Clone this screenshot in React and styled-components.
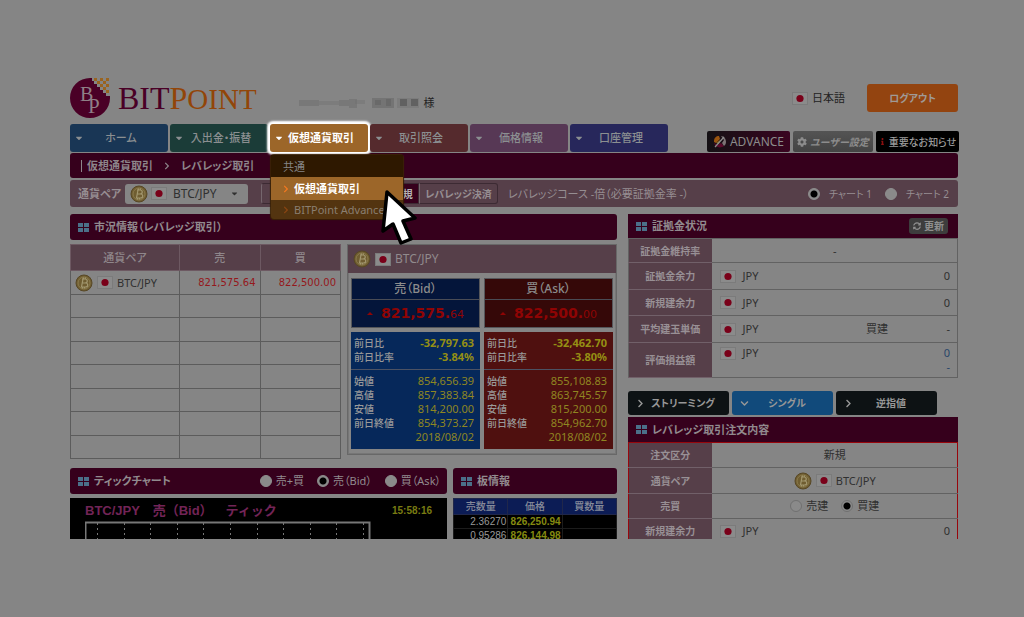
import React from 'react'
import styled, { createGlobalStyle, css } from 'styled-components'
import { FaCog, FaSyncAlt, FaInfo, FaChevronRight, FaChevronDown, FaCaretDown } from 'react-icons/fa'

const wine = '#36001c'
const mauve = '#563f49'
const paper = '#858585'
const line = '#626262'

const GlobalStyle = createGlobalStyle`
  * {
    box-sizing: border-box;
  }
  body {
    margin: 0;
    background: ${paper};
    color: #303030;
    font-family: 'Noto Sans', 'Noto Sans CJK JP', sans-serif;
    font-size: 11px;
    line-height: 14px;
    font-feature-settings: 'palt';
  }
  button, input, select {
    font: inherit;
    font-feature-settings: inherit;
    color: inherit;
    margin: 0;
  }
  button {
    border: 0;
    padding: 0;
    cursor: pointer;
  }
  a {
    color: inherit;
    text-decoration: none;
  }
  table {
    border-collapse: collapse;
    width: 100%;
  }
`

const Page = styled.div`
  height: 100vh;
  padding: 78px 66px 78px 70px;
  overflow: hidden;
`

const Screen = styled.div`
  height: 100%;
  overflow: hidden;
  margin: 0 -4px;
  padding: 0 4px;
`

const Header = styled.header`
  display: flex;
  align-items: center;
  height: 40px;
  margin-bottom: 6px;
`

const Brand = styled.a`
  display: flex;
  align-items: center;
  gap: 8px;
  font-family: 'Liberation Serif', serif;
  font-size: 32px;
  line-height: 38px;
  color: #4a0026;
  span {
    color: #924509;
  }
  small {
    font-size: 29px;
  }
`

const Customer = styled.div`
  display: flex;
  align-items: center;
  gap: 4px;
  flex: 1;
  padding: 10px 0 0 42px;
  color: #222;
`

const Language = styled.a`
  display: flex;
  align-items: center;
  gap: 4px;
  margin-right: 22px;
  color: #222;
`

const Logout = styled.button`
  width: 91px;
  height: 28px;
  border-radius: 3px;
  background: #934410;
  color: #a09a96;
  font-size: 10px;
  font-weight: 700;
`

const NavRow = styled.nav`
  display: flex;
  align-items: flex-end;
  justify-content: space-between;
  margin-bottom: 1px;
`

const Menu = styled.ul`
  display: flex;
  gap: 2px;
  margin: 0;
  padding: 0;
  list-style: none;
`

const MenuItem = styled.li`
  position: relative;
  width: 98px;
`

const MenuLink = styled.a`
  display: flex;
  align-items: center;
  height: 28px;
  padding: 0 10px 0 4px;
  border-radius: 3px;
  background: ${(p) => p.$color};
  color: #8b8f91;
  font-weight: 500;
  span {
    flex: 1;
    text-align: center;
  }
  ${(p) =>
    p.$open &&
    css`
      color: #fff;
      font-weight: 700;
      box-shadow: 0 0 2px 3px #fff;
    `}
`

const Dropdown = styled.ul`
  position: absolute;
  top: 31px;
  left: 1px;
  z-index: 2;
  width: 132px;
  margin: 0;
  padding: 0;
  list-style: none;
  border-radius: 3px;
  background: #533410;
  box-shadow: 0 0 1px 1px #3a2206;
`

const DropdownTitle = styled.li`
  padding: 5px 12px 3px;
  background: #2e1800;
  color: #858585;
`

const DropdownItem = styled.li`
  position: relative;
  background: ${(p) => (p.$active ? '#9c6629' : 'transparent')};
  color: ${(p) => (p.$active ? '#fff' : '#8a7f70')};
  font-weight: ${(p) => (p.$active ? 700 : 400)};
  a {
    display: flex;
    align-items: center;
    gap: 4px;
    height: ${(p) => (p.$active ? 23 : 19)}px;
    padding-left: 11px;
    white-space: nowrap;
  }
  a svg {
    color: ${(p) => (p.$active ? '#f47920' : '#8a4512')};
  }
`

const Pointer = styled.svg`
  position: absolute;
  left: 110px;
  top: 12px;
  z-index: 3;
`

const Tools = styled.div`
  display: flex;
  gap: 3px;
  margin-right: -1px;
`

const Tool = styled.button`
  display: flex;
  align-items: center;
  justify-content: center;
  gap: 3px;
  width: ${(p) => p.$width}px;
  height: 21px;
  border-radius: 2px;
  background: ${(p) => p.$bg};
  color: ${(p) => p.$color || '#8c8c8c'};
  font-size: ${(p) => p.$size || 10}px;
  font-weight: ${(p) => p.$weight || 400};
  font-style: ${(p) => (p.$italic ? 'italic' : 'normal')};
  white-space: nowrap;
`

const Crumbs = styled.div`
  display: flex;
  align-items: center;
  gap: 10px;
  height: 25px;
  padding-left: 11px;
  border-radius: 3px;
  background: ${wine};
  color: #8d858a;
  font-weight: 700;
  span {
    display: flex;
    gap: 5px;
  }
  span::before {
    content: '';
    width: 1px;
    height: 12px;
    background: #8d858a;
    align-self: center;
  }
`

const SubBar = styled.div`
  display: flex;
  align-items: center;
  height: 27px;
  margin: 2px 0 7px;
  padding: 0 9px 0 8px;
  border-radius: 3px;
  background: ${mauve};
  color: #968e92;
`

const PairLabel = styled.label`
  width: 47px;
  font-size: 11px;
  font-weight: 700;
`

const PairBox = styled.div`
  display: flex;
  align-items: center;
  gap: 3px;
  width: 123px;
  height: 20px;
  padding: 0 9px 0 5px;
  margin-right: 13px;
  border-radius: 3px;
  background: ${paper};
  color: #303030;
  select {
    flex: 1;
    min-width: 0;
    padding: 0 0 0 3px;
    border: 0;
    background: transparent;
    appearance: none;
    font-size: 12px;
  }
`

const CourseTabs = styled.div`
  display: flex;
`

const CourseTab = styled.button`
  width: 79px;
  height: 21px;
  border: 1px solid #3c2a33;
  border-left-color: #75666d;
  background: ${(p) => (p.$active ? wine : mauve)};
  color: ${(p) => (p.$active ? '#b5b5b5' : '#968e92')};
  font-size: 10px;
  font-weight: 700;
  &:first-child {
    border-radius: 3px 0 0 3px;
  }
  &:last-child {
    border-radius: 0 3px 3px 0;
  }
`

const Course = styled.p`
  flex: 1;
  margin: 0 0 0 10px;
`

const Radios = styled.div`
  display: flex;
  justify-content: ${(p) => (p.$center ? 'center' : 'flex-end')};
  gap: ${(p) => p.$gap}px;
  font-size: ${(p) => p.$size || 11}px;
  label {
    display: flex;
    align-items: center;
    gap: ${(p) => p.$inner || 4}px;
  }
`

const Radio = styled.input.attrs({ type: 'radio' })`
  appearance: none;
  width: 12px;
  height: 12px;
  border: ${(p) => (p.$thin ? '1px solid #707070' : '1px solid #8e8e8e')};
  border-radius: 50%;
  background: #8a8a8a;
  &:checked {
    background: radial-gradient(#000 0 3px, #8a8a8a 4px);
  }
`

const Columns = styled.main`
  display: grid;
  grid-template-columns: 547fr 330fr;
  gap: 11px;
  align-items: start;
`

const Split = styled.div`
  display: grid;
  grid-template-columns: ${(p) => p.$columns};
  gap: 6px;
  align-items: start;
`

const PanelHead = styled.div`
  display: flex;
  align-items: center;
  justify-content: space-between;
  height: ${(p) => p.$height || 26}px;
  margin-bottom: ${(p) => (p.$square ? 0 : 4)}px;
  padding: 0 ${(p) => (p.$square ? 10 : 6)}px 0 8px;
  border-radius: ${(p) => (p.$square ? 0 : 3)}px;
  background: ${wine};
  color: #918a8e;
  white-space: nowrap;
  h2 {
    display: flex;
    align-items: center;
    gap: 5px;
    margin: 0;
    font-size: 11px;
    font-weight: 700;
  }
`

const Refresh = styled.button`
  display: flex;
  align-items: center;
  gap: 3px;
  height: 16px;
  padding: 0 4px;
  border-radius: 3px;
  background: #3d3d3d;
  color: #8f8f8f;
  font-size: 10px;
  font-weight: 700;
`

const MarketTable = styled.table`
  table-layout: fixed;
  margin-bottom: 9px;
  th, td {
    border: 1px solid #5c5c5c;
    padding: 0 4px;
  }
  th {
    height: 26px;
    background: ${mauve};
    border-color: #6d5962;
    color: #8f878b;
    font-weight: 500;
  }
  th:first-child {
    width: 109px;
  }
  td {
    height: 24px;
    text-align: right;
    color: #95181c;
    font-family: 'DejaVu Sans', sans-serif;
    font-size: 10px;
  }
  tr:nth-child(even) td {
    height: 23px;
  }
`

const Pair = styled.span`
  display: flex;
  align-items: center;
  justify-content: ${(p) => (p.$center ? 'center' : 'flex-start')};
  gap: ${(p) => p.$gap || 4}px;
  color: ${(p) => p.$color || '#303030'};
  font-family: 'Noto Sans', sans-serif;
  font-size: ${(p) => p.$size || 11}px;
`

const Quote = styled.section`
  border: 1px solid #686868;
  box-shadow: inset 0 0 0 1px #767676;
`

const QuoteHead = styled.div`
  display: flex;
  align-items: center;
  height: 28px;
  padding-left: 5px;
  background: ${mauve};
`

const QuoteBody = styled.div`
  display: grid;
  grid-template-columns: 1fr 1fr;
  gap: 4px;
  padding: 5px 3px 5px;
`

const Price = styled.button`
  border: 1px solid #55565a;
  background: ${(p) => (p.$ask ? '#350808' : '#04153a')};
  color: #8c8c8c;
  text-align: center;
  font-weight: 500;
`

const PriceLabel = styled.span`
  display: block;
  height: 21px;
  font-size: 12px;
  line-height: 20px;
  border-bottom: 1px solid #4a4c55;
`

const PriceValue = styled.span`
  display: flex;
  align-items: baseline;
  justify-content: center;
  height: 27px;
  line-height: 27px;
  color: #8f0404;
  font-family: 'DejaVu Sans', sans-serif;
  font-size: 14px;
  font-weight: 700;
  i {
    width: 0;
    height: 0;
    margin-right: 8px;
    align-self: center;
    border: 3px solid transparent;
    border-top: 0;
    border-bottom-color: #8f0404;
  }
  small {
    font-size: 11px;
    font-weight: 400;
  }
`

const Stats = styled.div`
  background: ${(p) => (p.$ask ? '#4f100f' : '#06285a')};
  dl {
    margin: 0;
    padding: 4px 6px 5px 3px;
  }
  dl + dl {
    border-top: 1px solid #4c5263;
  }
  div {
    display: flex;
    justify-content: space-between;
  }
  dt {
    color: #999;
    font-size: 10px;
    font-weight: 500;
  }
  dd {
    margin: 0;
    color: #8f8622;
  }
  dl:first-child dd {
    color: #958f14;
    font-weight: 700;
  }
`

const Chart = styled.section`
  background: #000;
  padding: 3px 15px 0;
`

const ChartTitle = styled.div`
  display: flex;
  align-items: center;
  justify-content: space-between;
  height: 20px;
  color: #722457;
  font-family: 'Liberation Sans', 'Noto Sans CJK JP', sans-serif;
  font-size: 13px;
  font-weight: 700;
  font-feature-settings: normal;
  text-spacing-trim: space-all;
  time {
    color: #797b12;
    font-size: 10px;
  }
`

const BookTable = styled.table`
  table-layout: fixed;
  background: #000;
  font-family: 'Liberation Sans', 'Noto Sans CJK JP', sans-serif;
  font-size: 10px;
  th {
    height: 16px;
    padding: 0;
    border: 1px solid #20274a;
    background: #0c1c55;
    color: #868b9a;
    line-height: 14px;
    font-weight: 500;
  }
  td {
    height: 14px;
    padding: 0 1px;
    border: 1px solid #1c1c1c;
    color: #999;
    text-align: right;
    line-height: 12px;
  }
  td:nth-child(2) {
    color: #858a10;
    font-weight: 700;
  }
`

const InfoTable = styled.table`
  border: 1px solid ${(p) => (p.$alert ? '#98060c' : line)};
  th, td {
    border-bottom: 1px solid ${line};
    padding: 0 7px 0 8px;
  }
  th {
    width: 83px;
    padding: 0;
    border-color: #716069;
    background: ${mauve};
    color: #989095;
    font-size: 10px;
    font-weight: 700;
  }
  ${(p) =>
    p.$alert &&
    css`
      th:first-child {
        border-left: 1px solid #98060c;
      }
      td:last-child {
        border-right: 1px solid #98060c;
      }
    `}
`

const InfoRow = styled.tr`
  height: ${(p) => p.$height}px;
`

const Value = styled.div`
  display: grid;
  grid-template-columns: 1fr 1fr 62px;
  align-items: start;
  .side {
    text-align: right;
  }
  .amount {
    text-align: right;
    color: ${(p) => (p.$blue ? '#29466a' : 'inherit')};
  }
`

const Centered = styled.div`
  text-align: center;
`

const OrderTabs = styled.div`
  display: flex;
  gap: 3px;
  margin: 13px 0 2px;
`

const OrderTab = styled.button`
  display: flex;
  align-items: center;
  width: 101px;
  height: 24px;
  padding: 0 8px;
  border-radius: 3px;
  background: ${(p) => (p.$active ? '#114a7b' : '#0d1214')};
  color: #979797;
  font-size: 10px;
  font-weight: 700;
  span {
    flex: 1;
    text-align: center;
  }
`

const Logo = () => (
  <svg width="40" height="40" viewBox="0 0 40 40" aria-hidden="true">
    <path
      d="M20 0A20 20 0 1 0 40 20L40 18H36V15H33V12H30V9H27V6H24V3H22V0Z"
      fill="#4a0026"
    />
    <g fill="#9a641f">
      <rect x="24" y="0" width="3" height="3" />
      <rect x="30" y="0" width="3" height="3" />
      <rect x="27" y="3" width="3" height="3" />
      <rect x="33" y="3" width="3" height="3" />
      <rect x="30" y="6" width="3" height="3" />
      <rect x="36" y="0" width="3" height="3" />
      <rect x="33" y="9" width="3" height="3" />
      <rect x="36" y="6" width="3" height="3" />
      <rect x="36" y="12" width="3" height="3" />
    </g>
    <text x="10" y="23" fill="#8f7f87" fontFamily="Liberation Serif, serif" fontSize="20">B</text>
    <text x="18" y="35" fill="#8f7f87" fontFamily="Liberation Serif, serif" fontSize="21">P</text>
  </svg>
)

const Coin = () => (
  <svg width="18" height="18" viewBox="0 0 18 18" aria-hidden="true">
    <circle cx="9" cy="9" r="8" fill="#6f5d31" stroke="#574725" />
    <circle cx="9" cy="9" r="6" fill="none" stroke="#8a7a4c" strokeWidth="1" />
    <path
      d="M7 5h3c3 0 3 4 0 4h-2.500h3c3 0 3 4 0 4H6.500L8 5M8.500 3.500L8.200 5M10.500 3.500L10.200 5M7.500 13v1.500M9.500 13v1.500"
      fill="none"
      stroke="#a2976f"
      strokeWidth="1.200"
    />
  </svg>
)

const Flag = () => (
  <svg width="16" height="13" viewBox="0 0 16 13" aria-hidden="true">
    <rect x="0.500" y="0.500" width="15" height="12" fill="#8b8b8b" stroke="#7b7b7b" />
    <circle cx="8" cy="6.500" r="3.600" fill="#790019" />
  </svg>
)

const Tiles = () => (
  <svg width="11" height="9" viewBox="0 0 11 9" aria-hidden="true">
    <path d="M0 0h5v4H0zM6 0h5v4H6zM0 5h5v4H0zM6 5h5v4H6z" fill="#4b7089" />
  </svg>
)

const Mosaic = () => (
  <svg width="121" height="14" viewBox="0 0 121 14" aria-label="お客様名">
    <g fill="#6f6f6f">
      <path d="M0 4h20v6H0zM40 4h16v6H40zM50 3h8v9h-8z" opacity=".6" />
      <path d="M20 5h20v4H20zM56 4h10v4H56z" opacity=".4" />
    </g>
    <g fill="#5a5a5a">
      <path d="M73 2h22v10H73z" opacity=".4" />
      <path d="M76 4h6v5h-6zM87 3h5v7h-5z" opacity=".4" />
      <path d="M98 2h22v10H98z" opacity=".2" />
      <path d="M101 3h7v7h-7zM112 3h7v7h-7z" opacity=".8" />
    </g>
  </svg>
)

const AdvanceMark = () => (
  <svg width="14" height="14" viewBox="0 0 14 14" aria-hidden="true">
    <path d="M1 8C2 12 7 14 11 11L8 8L5 10Z" fill="#5c0a2c" />
    <path d="M1 6C1 3 3 1 6 1L7 4L3 8L1 7Z" fill="#9a5510" />
    <path d="M3 8L7 5L6 9Z" fill="#8a6a20" />
    <path d="M8 1C11 1 13 4 13 7C13 9 12 10 11 11L9 8L11 5Z" fill="#7d7476" />
    <path d="M2 12L11 2" stroke="#8f8f8f" strokeWidth="1.200" />
  </svg>
)

const menuItems = [
  { label: 'ホーム', color: '#193655' },
  { label: '入出金・振替', color: '#1b3c38' },
  { label: '仮想通貨取引', color: '#9c6629', open: true },
  { label: '取引照会', color: '#552a2d' },
  { label: '価格情報', color: '#573855' },
  { label: '口座管理', color: '#27275b' },
]

const quotes = [
  {
    label: '売（Bid）',
    price: '821,575.',
    decimals: '64',
    change: [['前日比', '-32,797.63'], ['前日比率', '-3.84%']],
    history: [['始値', '854,656.39'], ['高値', '857,383.84'], ['安値', '814,200.00'], ['前日終値', '854,373.27'], ['', '2018/08/02']],
  },
  {
    label: '買（Ask）',
    price: '822,500.',
    decimals: '00',
    ask: true,
    change: [['前日比', '-32,462.70'], ['前日比率', '-3.80%']],
    history: [['始値', '855,108.83'], ['高値', '863,745.57'], ['安値', '815,200.00'], ['前日終値', '854,962.70'], ['', '2018/08/02']],
  },
]

const Title = ({ children }) => (
  <h2>
    <Tiles />
    {children}
  </h2>
)

const StatList = ({ rows }) => (
  <dl>
    {rows.map(([name, value]) => (
      <div key={name}>
        <dt>{name}</dt>
        <dd>{value}</dd>
      </div>
    ))}
  </dl>
)

const JpyRow = ({ name, height, side, amount, extra, blue }) => (
  <InfoRow $height={height}>
    <th scope="row">{name}</th>
    <td>
      <Value $blue={blue}>
        <Pair $gap={7}>
          <Flag />
          JPY
        </Pair>
        <span className="side">{side}</span>
        <span className="amount">
          {amount}
          {extra && <br />}
          {extra}
        </span>
      </Value>
    </td>
  </InfoRow>
)

const TopNav = () => (
  <NavRow>
    <Menu>
      {menuItems.map((item) => (
        <MenuItem key={item.label}>
          <MenuLink href="#" $color={item.color} $open={item.open}>
            <FaCaretDown size={10} />
            <span>{item.label}</span>
          </MenuLink>
          {item.open && (
            <Dropdown>
              <DropdownTitle>共通</DropdownTitle>
              <DropdownItem $active>
                <a href="#">
                  <FaChevronRight size={8} />
                  仮想通貨取引
                </a>
                <Pointer width="38" height="56" viewBox="0 0 38 56">
                  <path
                    d="M6 3L34 29L22 32L30 50L20 54L12 35L2 42Z"
                    fill="#fff"
                    stroke="#000"
                    strokeWidth="3.500"
                    strokeLinejoin="round"
                  />
                </Pointer>
              </DropdownItem>
              <DropdownItem>
                <a href="#">
                  <FaChevronRight size={8} />
                  BITPoint Advance
                </a>
              </DropdownItem>
            </Dropdown>
          )}
        </MenuItem>
      ))}
    </Menu>
    <Tools>
      <Tool $width={83} $bg="linear-gradient(90deg, #141114, #3a0420)" $size={12}>
        <AdvanceMark />
        ADVANCE
      </Tool>
      <Tool $width={80} $bg="linear-gradient(#545454, #434343)" $weight={700} $italic>
        <FaCog size={10} />
        ユーザー設定
      </Tool>
      <Tool $width={83} $bg="#000" $weight={500} $color="#9a9a9a">
        <FaInfo size={7} color="#8c1010" />
        重要なお知らせ
      </Tool>
    </Tools>
  </NavRow>
)

const App = () => {
  return (
    <Page>
      <GlobalStyle />
      <Screen>
        <Header>
          <Brand href="#">
            <Logo />
            <div>
              BIT
              <span>
                P<small>OINT</small>
              </span>
            </div>
          </Brand>
          <Customer>
            <Mosaic />
            様
          </Customer>
          <Language href="#">
            <Flag />
            日本語
          </Language>
          <Logout>ログアウト</Logout>
        </Header>
        <TopNav />
        <Crumbs>
          <span>仮想通貨取引</span>
          <FaChevronRight size={8} />
          レバレッジ取引
        </Crumbs>
        <SubBar>
          <PairLabel htmlFor="pair">通貨ペア</PairLabel>
          <PairBox>
            <Coin />
            <Flag />
            <select id="pair">
              <option>BTC/JPY</option>
            </select>
            <FaCaretDown size={9} />
          </PairBox>
          <CourseTabs>
            <CourseTab>現物取引</CourseTab>
            <CourseTab $active>レバレッジ新規</CourseTab>
            <CourseTab>レバレッジ決済</CourseTab>
          </CourseTabs>
          <Course>レバレッジコース -倍（必要証拠金率 -）</Course>
          <Radios $gap={13} $inner={9} $size={10}>
            <label>
              <Radio name="chart" defaultChecked />
              チャート 1
            </label>
            <label>
              <Radio name="chart" />
              チャート 2
            </label>
          </Radios>
        </SubBar>
        <Columns>
          <div>
            <PanelHead>
              <Title>市況情報（レバレッジ取引）</Title>
            </PanelHead>
            <Split $columns="271fr 270fr">
              <MarketTable>
                <thead>
                  <tr>
                    <th>通貨ペア</th>
                    <th>売</th>
                    <th>買</th>
                  </tr>
                </thead>
                <tbody>
                  <tr>
                    <td>
                      <Pair>
                        <Coin />
                        <Flag />
                        BTC/JPY
                      </Pair>
                    </td>
                    <td>821,575.64</td>
                    <td>822,500.00</td>
                  </tr>
                  {[...Array(7)].map((_, i) => (
                    <tr key={i}>
                      <td />
                      <td />
                      <td />
                    </tr>
                  ))}
                </tbody>
              </MarketTable>
              <Quote>
                <QuoteHead>
                  <Pair $size={12} $color="#918a8d">
                    <Coin />
                    <Flag />
                    BTC/JPY
                  </Pair>
                </QuoteHead>
                <QuoteBody>
                  {quotes.map((q) => (
                    <Price key={q.label} $ask={q.ask}>
                      <PriceLabel>{q.label}</PriceLabel>
                      <PriceValue>
                        <i />
                        {q.price}
                        <small>{q.decimals}</small>
                      </PriceValue>
                    </Price>
                  ))}
                  {quotes.map((q) => (
                    <Stats key={q.label} $ask={q.ask}>
                      <StatList rows={q.change} />
                      <StatList rows={q.history} />
                    </Stats>
                  ))}
                </QuoteBody>
              </Quote>
            </Split>
            <Split $columns="377fr 164fr">
              <div>
                <PanelHead>
                  <Title>ティックチャート</Title>
                  <Radios $gap={13}>
                    <label>
                      <Radio name="tick" />
                      売+買
                    </label>
                    <label>
                      <Radio name="tick" defaultChecked />
                      売（Bid）
                    </label>
                    <label>
                      <Radio name="tick" />
                      買（Ask）
                    </label>
                  </Radios>
                </PanelHead>
                <Chart>
                  <ChartTitle>
                    BTC/JPY　売（Bid）　ティック
                    <time>15:58:16</time>
                  </ChartTitle>
                  <svg width="286" height="60" viewBox="0 0 286 60">
                    <path d="M0.500 60V1.500H284.500V60" fill="none" stroke="#777" strokeWidth="2" />
                    {[...Array(11)].map((_, i) => (
                      <path
                        key={i}
                        d={`M${12.5 + Math.round(i * 26.6)} 2V60`}
                        stroke="#777"
                        strokeDasharray="2 3"
                      />
                    ))}
                  </svg>
                </Chart>
              </div>
              <div>
                <PanelHead>
                  <Title>板情報</Title>
                </PanelHead>
                <BookTable>
                  <thead>
                    <tr>
                      <th>売数量</th>
                      <th>価格</th>
                      <th>買数量</th>
                    </tr>
                  </thead>
                  <tbody>
                    <tr>
                      <td>2.36270</td>
                      <td>826,250.94</td>
                      <td />
                    </tr>
                    <tr>
                      <td>0.95286</td>
                      <td>826,144.98</td>
                      <td />
                    </tr>
                  </tbody>
                </BookTable>
              </div>
            </Split>
          </div>
          <div>
            <PanelHead $square $height={24}>
              <Title>証拠金状況</Title>
              <Refresh>
                <FaSyncAlt size={8} />
                更新
              </Refresh>
            </PanelHead>
            <InfoTable>
              <tbody>
                <InfoRow $height={24}>
                  <th scope="row">証拠金維持率</th>
                  <td>
                    <Centered>-</Centered>
                  </td>
                </InfoRow>
                <JpyRow name="証拠金余力" height={27} amount="0" />
                <JpyRow name="新規建余力" height={26} amount="0" />
                <JpyRow name="平均建玉単価" height={27} side="買建" amount="-" />
                <JpyRow name="評価損益額" height={35} amount="0" extra="-" blue />
              </tbody>
            </InfoTable>
            <OrderTabs>
              <OrderTab>
                <FaChevronRight size={9} />
                <span>ストリーミング</span>
              </OrderTab>
              <OrderTab $active>
                <FaChevronDown size={9} />
                <span>シングル</span>
              </OrderTab>
              <OrderTab>
                <FaChevronRight size={9} />
                <span>逆指値</span>
              </OrderTab>
            </OrderTabs>
            <PanelHead $square $height={25}>
              <Title>レバレッジ取引注文内容</Title>
            </PanelHead>
            <InfoTable $alert>
              <tbody>
                <InfoRow $height={25}>
                  <th scope="row">注文区分</th>
                  <td>
                    <Centered>新規</Centered>
                  </td>
                </InfoRow>
                <InfoRow $height={26}>
                  <th scope="row">通貨ペア</th>
                  <td>
                    <Pair $center>
                      <Coin />
                      <Flag />
                      BTC/JPY
                    </Pair>
                  </td>
                </InfoRow>
                <InfoRow $height={25}>
                  <th scope="row">売買</th>
                  <td>
                    <Radios $gap={13} $center>
                      <label>
                        <Radio name="side" $thin />
                        売建
                      </label>
                      <label>
                        <Radio name="side" $thin defaultChecked />
                        買建
                      </label>
                    </Radios>
                  </td>
                </InfoRow>
                <JpyRow name="新規建余力" height={25} amount="0" />
              </tbody>
            </InfoTable>
          </div>
        </Columns>
      </Screen>
    </Page>
  )
}

export default App
